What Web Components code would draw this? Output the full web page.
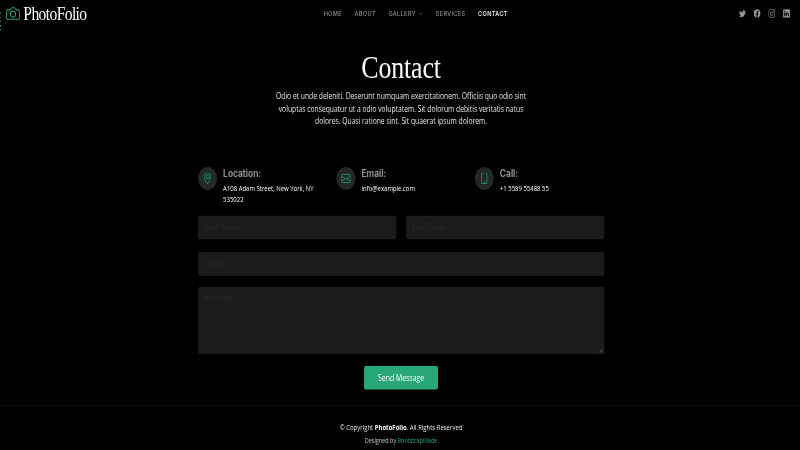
<!DOCTYPE html>
<html lang="en"><head><meta charset="utf-8"><title>PhotoFolio</title>
<style>
html,body{margin:0;height:100%;background:#000;overflow:hidden}
</style></head><body>
<pf-app>
  <pf-header></pf-header>
  <pf-hero title="Contact">Odio et unde deleniti. Deserunt numquam exercitationem. Officiis quo odio sint voluptas consequatur ut a odio voluptatem. Sit dolorum debitis veritatis natus dolores. Quasi ratione sint. Sit quaerat ipsum dolorem.</pf-hero>
  <pf-contact></pf-contact>
  <pf-footer></pf-footer>
</pf-app>
<script>
const ICONS={
camera:'<path d="M15 12a1 1 0 0 1-1 1H2a1 1 0 0 1-1-1V6a1 1 0 0 1 1-1h1.172a3 3 0 0 0 2.12-.879l.83-.828A1 1 0 0 1 6.827 3h2.344a1 1 0 0 1 .707.293l.828.828A3 3 0 0 0 12.828 5H14a1 1 0 0 1 1 1v6zM2 4a2 2 0 0 0-2 2v6a2 2 0 0 0 2 2h12a2 2 0 0 0 2-2V6a2 2 0 0 0-2-2h-1.172a2 2 0 0 1-1.414-.586l-.828-.828A2 2 0 0 0 9.172 2H6.828a2 2 0 0 0-1.414.586l-.828.828A2 2 0 0 1 3.172 4H2z"/><path d="M8 11a2.5 2.5 0 1 1 0-5 2.5 2.5 0 0 1 0 5zm0 1a3.5 3.5 0 1 0 0-7 3.5 3.5 0 0 0 0 7zM3 6.5a.5.5 0 1 1-1 0 .5.5 0 0 1 1 0z"/>',
geo:'<path d="M12.166 8.94c-.524 1.062-1.234 2.12-1.96 3.07A31.493 31.493 0 0 1 8 14.58a31.481 31.481 0 0 1-2.206-2.57c-.726-.95-1.436-2.008-1.96-3.07C3.304 7.867 3 6.862 3 6a5 5 0 0 1 10 0c0 .862-.305 1.867-.834 2.94zM8 16s6-5.686 6-10A6 6 0 0 0 2 6c0 4.314 6 10 6 10z"/><path d="M8 8a2 2 0 1 1 0-4 2 2 0 0 1 0 4zm0 1a3 3 0 1 0 0-6 3 3 0 0 0 0 6z"/>',
envelope:'<path d="M0 4a2 2 0 0 1 2-2h12a2 2 0 0 1 2 2v8a2 2 0 0 1-2 2H2a2 2 0 0 1-2-2V4Zm2-1a1 1 0 0 0-1 1v.217l7 4.2 7-4.2V4a1 1 0 0 0-1-1H2Zm13 2.383-4.708 2.825L15 11.105V5.383Zm-.034 6.876-5.64-3.471L8 9.583l-1.326-.795-5.64 3.47A1 1 0 0 0 2 13h12a1 1 0 0 0 .966-.741ZM1 11.105l4.708-2.897L1 5.383v5.722Z"/>',
phone:'<path d="M11 1a1 1 0 0 1 1 1v12a1 1 0 0 1-1 1H5a1 1 0 0 1-1-1V2a1 1 0 0 1 1-1h6zM5 0a2 2 0 0 0-2 2v12a2 2 0 0 0 2 2h6a2 2 0 0 0 2-2V2a2 2 0 0 0-2-2H5z"/><path d="M8 14a1 1 0 1 0 0-2 1 1 0 0 0 0 2z"/>',
twitter:'<path d="M5.026 15c6.038 0 9.341-5.003 9.341-9.334 0-.14 0-.282-.006-.422A6.685 6.685 0 0 0 16 3.542a6.658 6.658 0 0 1-1.889.518 3.301 3.301 0 0 0 1.447-1.817 6.533 6.533 0 0 1-2.087.793A3.286 3.286 0 0 0 7.875 6.03a9.325 9.325 0 0 1-6.767-3.429 3.289 3.289 0 0 0 1.018 4.382A3.323 3.323 0 0 1 .64 6.575v.045a3.288 3.288 0 0 0 2.632 3.218 3.203 3.203 0 0 1-.865.115 3.23 3.23 0 0 1-.614-.057 3.283 3.283 0 0 0 3.067 2.277A6.588 6.588 0 0 1 .78 13.58a6.32 6.32 0 0 1-.78-.045A9.344 9.344 0 0 0 5.026 15z"/>',
facebook:'<path d="M16 8.049c0-4.446-3.582-8.05-8-8.05C3.58 0-.002 3.603-.002 8.05c0 4.017 2.926 7.347 6.75 7.951v-5.625h-2.03V8.05H6.75V6.275c0-2.017 1.195-3.131 3.022-3.131.876 0 1.791.157 1.791.157v1.98h-1.009c-.993 0-1.303.621-1.303 1.258v1.51h2.218l-.354 2.326H9.25V16c3.824-.604 6.75-3.934 6.75-7.951z"/>',
instagram:'<path d="M8 0C5.829 0 5.556.01 4.703.048 3.85.088 3.269.222 2.76.42a3.917 3.917 0 0 0-1.417.923A3.927 3.927 0 0 0 .42 2.76C.222 3.268.087 3.85.048 4.7.01 5.555 0 5.827 0 8.001c0 2.172.01 2.444.048 3.297.04.852.174 1.433.372 1.942.205.526.478.972.923 1.417.444.445.89.719 1.416.923.51.198 1.09.333 1.942.372C5.555 15.99 5.827 16 8 16s2.444-.01 3.298-.048c.851-.04 1.434-.174 1.943-.372a3.916 3.916 0 0 0 1.416-.923c.445-.445.718-.891.923-1.417.197-.509.332-1.09.372-1.942C15.99 10.445 16 10.173 16 8s-.01-2.445-.048-3.299c-.04-.851-.175-1.433-.372-1.941a3.926 3.926 0 0 0-.923-1.417A3.911 3.911 0 0 0 13.24.42c-.51-.198-1.092-.333-1.943-.372C10.443.01 10.172 0 7.998 0h.003zm-.717 1.442h.718c2.136 0 2.389.007 3.232.046.78.035 1.204.166 1.486.275.373.145.64.319.92.599.28.28.453.546.598.92.11.281.24.705.275 1.485.039.843.047 1.096.047 3.231s-.008 2.389-.047 3.232c-.035.78-.166 1.203-.275 1.485a2.47 2.47 0 0 1-.599.919c-.28.28-.546.453-.92.598-.28.11-.704.24-1.485.276-.843.038-1.096.047-3.232.047s-2.39-.009-3.233-.047c-.78-.036-1.203-.166-1.485-.276a2.478 2.478 0 0 1-.92-.598 2.48 2.48 0 0 1-.6-.92c-.109-.281-.24-.705-.275-1.485-.038-.843-.046-1.096-.046-3.233 0-2.136.008-2.388.046-3.231.036-.78.166-1.204.276-1.486.145-.373.319-.64.599-.92.28-.28.546-.453.92-.598.282-.11.705-.24 1.485-.276.738-.034 1.024-.044 2.515-.045v.002zm4.988 1.328a.96.96 0 1 0 0 1.92.96.96 0 0 0 0-1.92zm-4.27 1.122a4.109 4.109 0 1 0 0 8.217 4.109 4.109 0 0 0 0-8.217zm0 1.441a2.667 2.667 0 1 1 0 5.334 2.667 2.667 0 0 1 0-5.334z"/>',
linkedin:'<path d="M0 1.146C0 .513.526 0 1.175 0h13.65C15.474 0 16 .513 16 1.146v13.708c0 .633-.526 1.146-1.175 1.146H1.175C.526 16 0 15.487 0 14.854V1.146zm4.943 12.248V6.169H2.542v7.225h2.401zm-1.2-8.212c.837 0 1.358-.554 1.358-1.248-.015-.709-.52-1.248-1.342-1.248-.822 0-1.359.54-1.359 1.248 0 .694.521 1.248 1.327 1.248h.016zm4.908 8.212V9.359c0-.216.016-.432.08-.586.173-.431.568-.878 1.232-.878.869 0 1.216.662 1.216 1.634v3.865h2.401V9.25c0-2.22-1.184-3.252-2.764-3.252-1.274 0-1.845.7-2.165 1.193v.025h-.016a5.54 5.54 0 0 1 .016-.025V6.169h-2.4c.03.678 0 7.225 0 7.225h2.4z"/>',
chevron:'<path d="M1.646 4.646a.5.5 0 0 1 .708 0L8 10.293l5.646-5.647a.5.5 0 0 1 .708.708l-6 6a.5.5 0 0 1-.708 0l-6-6a.5.5 0 0 1 0-.708z"/>'
};
function shadow(el,html){el.attachShadow({mode:'open'}).innerHTML=html;}
customElements.define('pf-icon',class extends HTMLElement{connectedCallback(){
  const s=this.getAttribute('size')||16;
  shadow(this,`<style>:host{display:inline-flex;flex:none}svg{display:block;width:${s}px;height:${s}px;fill:currentColor}</style><svg viewBox="0 0 16 16">${ICONS[this.getAttribute('name')]}</svg>`);
}});
customElements.define('pf-app',class extends HTMLElement{connectedCallback(){
  shadow(this,`<style>
  :host{display:block;width:800px;height:450px;overflow:hidden;background:#000}
  .stage{width:1850px;height:865px;overflow:hidden;transform:scale(.4324,.52);transform-origin:0 0;filter:blur(.6px);font-family:"Open Sans",sans-serif;color:#fff;background:#000}
  </style><div class="stage"><slot></slot></div>`);
}});
customElements.define('pf-header',class extends HTMLElement{connectedCallback(){
  const links=[['Home'],['About'],['Gallery',1],['Services'],['Contact',0,1]];
  shadow(this,`<style>
  :host{display:flex;justify-content:space-between;align-items:center;height:52px;padding:0 23px 0 14px;position:relative}
  .edge{position:absolute;left:0;top:24px;width:2px;height:34px;background:repeating-linear-gradient(#27a776 0 3px,transparent 3px 8px)}
  .logo{display:flex;align-items:center;gap:8px;font:400 36px/52px "Liberation Serif",serif;letter-spacing:-1.4px;color:#fff}
  .logo pf-icon{color:#27a776}
  nav{display:flex;gap:29px;margin-left:14px;font:400 13px/52px Inter,sans-serif;text-transform:uppercase;letter-spacing:.8px;color:rgba(255,255,255,.6)}
  nav span{display:flex;align-items:center;gap:5px}
  nav .on{color:#fff;font-weight:500}
  .soc{display:flex;gap:18px;color:rgba(255,255,255,.6)}
  </style>
  <div class="edge"></div>
  <div class="logo"><pf-icon name="camera" size="32"></pf-icon>PhotoFolio</div>
  <nav>${links.map(([t,c,on])=>`<span class="${on?'on':''}">${t}${c?'<pf-icon name="chevron" size="12"></pf-icon>':''}</span>`).join('')}</nav>
  <div class="soc">${['twitter','facebook','instagram','linkedin'].map(n=>`<pf-icon name="${n}"></pf-icon>`).join('')}</div>`);
}});
customElements.define('pf-hero',class extends HTMLElement{connectedCallback(){
  shadow(this,`<style>
  :host{display:block;text-align:center;padding:45px 0 0 5px}
  h2{margin:0;font:400 60px/66px "Liberation Serif",serif;letter-spacing:-.4px;color:#fff}
  p{margin:10px auto 0;width:600px;font:400 15.6px/24px "Open Sans",sans-serif;color:rgba(255,255,255,.9)}
  </style><h2>${this.getAttribute('title')}</h2><p><slot></slot></p>`);
}});
customElements.define('pf-info',class extends HTMLElement{connectedCallback(){
  shadow(this,`<style>
  :host{display:flex;gap:14px;align-items:flex-start}
  .c{width:44px;height:44px;border-radius:50%;background:#222927;color:#27a776;display:flex;align-items:center;justify-content:center;flex:none}
  h4{margin:0 0 6px;font:600 19.5px/24px Inter,sans-serif;color:rgba(255,255,255,.6)}
  p{margin:0;max-width:230px;font:400 13.8px/21px "Open Sans",sans-serif;color:#fff}
  </style><div class="c"><pf-icon name="${this.getAttribute('icon')}" size="22"></pf-icon></div><div><h4>${this.getAttribute('label')}</h4><p><slot></slot></p></div>`);
}});
customElements.define('pf-field',class extends HTMLElement{connectedCallback(){
  const ta=this.hasAttribute('area');
  shadow(this,`<style>
  :host{display:block}
  .f{box-sizing:border-box;display:block;width:100%;height:${ta?129:45}px;background:#191b1d;border:1px solid #2a2d30;border-radius:4px;padding:${ta?'8px':'0'} 12px;font:400 16px/${ta?24:43}px "Open Sans",sans-serif;color:#292b2d;position:relative}
  ${ta?`.g{position:absolute;right:1px;bottom:1px;width:12px;height:12px;color:#555}`:''}
  </style><div class="f">${this.getAttribute('ph')}${ta?'<svg class="g" viewBox="0 0 12 12"><path d="M11 3 3 11M11 7 7 11" stroke="currentColor" stroke-width="1.5"/></svg>':''}</div>`);
}});
customElements.define('pf-contact',class extends HTMLElement{connectedCallback(){
  shadow(this,`<style>
  :host{display:flex;flex-direction:column;width:939px;margin:0 auto;box-sizing:border-box;padding-top:76px;position:relative;left:2.5px}
  .info{display:grid;grid-template-columns:repeat(3,320px);height:94px}
  .two{display:grid;grid-template-columns:1fr 1fr;gap:24px;margin-bottom:25px}
  .s{margin-bottom:22px}
  .m{margin-bottom:23px}
  button{display:block;margin:0 auto;width:171px;height:45px;border:0;border-radius:4px;background:#27a776;color:#fff;font:400 16px "Open Sans",sans-serif}
  </style>
  <div class="info">
    <pf-info icon="geo" label="Location:">A108 Adam Street, New York, NY 535022</pf-info>
    <pf-info icon="envelope" label="Email:">info@example.com</pf-info>
    <pf-info icon="phone" label="Call:">+1 5589 55488 55</pf-info>
  </div>
  <div class="two"><pf-field ph="Your Name"></pf-field><pf-field ph="Your Email"></pf-field></div>
  <pf-field class="s" ph="Subject"></pf-field>
  <pf-field class="m" ph="Message" area></pf-field>
  <button>Send Message</button>`);
}});
customElements.define('pf-footer',class extends HTMLElement{connectedCallback(){
  shadow(this,`<style>
  :host{display:block;margin-top:31px;border-top:1px solid #1a1a1a;padding:28px 0 0 5px;text-align:center;font:400 13.8px/25px "Open Sans",sans-serif;color:rgba(255,255,255,.9)}
  b{color:#fff;font-weight:700}
  .d{font-size:12.7px;color:rgba(255,255,255,.75)}
  a{color:#27a776;text-decoration:none}
  </style><div>© Copyright <b>PhotoFolio</b>. All Rights Reserved</div><div class="d">Designed by <a href="#">BootstrapMade</a></div>`);
}});
</script>
</body></html>
